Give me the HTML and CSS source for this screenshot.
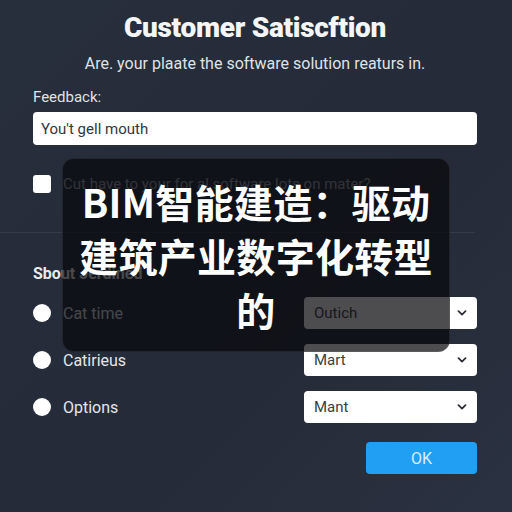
FILE: index.html
```html
<!DOCTYPE html>
<html>

<head>
    <title>Customer Satisfaction</title>
    <link rel="stylesheet" href="styles.css">
</head>

<body>
    <div id="surveycontainer">
        <h1 class="title">Customer Satiscftion</h1>
        <p class="subtitle">Are. your plaate the software solution reaturs in.</p>

        <label class="field-label" for="feedback">Feedback:</label>
        <div class="text-input" id="feedback">You't gell mouth</div>

        <div class="check-row">
            <span class="checkbox"></span>
            <span class="check-text">Cut have to your for al software lots on mater?</span>
        </div>

        <div class="divider"></div>

        <h2 class="section-title">Sbout Jerdined</h2>

        <div class="option-list">
            <div class="option-row">
                <span class="radio"></span>
                <span class="option-name">Cat time</span>
                <div class="select">Outich <svg class="chevron" viewBox="0 0 10 6"><path d="M1.5 1.2 5 4.6 8.5 1.2" /></svg></div>
            </div>
            <div class="option-row">
                <span class="radio"></span>
                <span class="option-name">Catirieus</span>
                <div class="select">Mart <svg class="chevron" viewBox="0 0 10 6"><path d="M1.5 1.2 5 4.6 8.5 1.2" /></svg></div>
            </div>
            <div class="option-row">
                <span class="radio"></span>
                <span class="option-name">Options</span>
                <div class="select">Mant <svg class="chevron" viewBox="0 0 10 6"><path d="M1.5 1.2 5 4.6 8.5 1.2" /></svg></div>
            </div>
        </div>

        <div class="actions">
            <button class="ok-button">OK</button>
        </div>
    </div>

    <!-- caption card sitting over the form -->
    <div class="caption">
        <p>BIM智能建造：驱动<br>建筑产业数字化转型<br>的</p>
    </div>
</body>

</html>
```

FILE: styles.css
```css
body {
    font-family: Roboto, "Liberation Sans", sans-serif;
    background: linear-gradient(135deg, #272e3c 0%, #252b38 60%, #2a3140 100%);
    color: #e6e8ec;
    margin: 0;
    padding: 0;
    width: 512px;
    height: 512px;
    overflow: hidden;
    position: relative;
}

#surveycontainer {
    padding: 12px 35px 0 33px;
    display: flex;
    flex-direction: column;
}

.title {
    margin: 0;
    font-size: 28px;
    line-height: 32px;
    font-weight: 900;
    text-align: center;
    color: #f4f5f7;
    letter-spacing: -0.3px;
}

.subtitle {
    margin: 10px 0 0;
    font-size: 16px;
    line-height: 20px;
    text-align: center;
    color: #dfe2e7;
}

.field-label {
    margin-top: 13px;
    font-size: 15px;
    line-height: 20px;
    color: #dfe2e7;
}

.text-input {
    margin-top: 5px;
    height: 33px;
    box-sizing: border-box;
    background-color: #fff;
    border-radius: 4px;
    padding: 0 8px;
    display: flex;
    align-items: center;
    font-size: 15px;
    color: #33363b;
}

.check-row {
    margin-top: 30px;
    height: 18px;
    display: flex;
    align-items: center;
    gap: 12px;
}

.checkbox {
    width: 18px;
    height: 18px;
    border-radius: 3px;
    background-color: #fff;
}

.check-text {
    font-size: 15px;
    color: #9ba1ab;
}

.divider {
    margin: 39px -35px 0 -33px;
    width: 475px;
    height: 1px;
    background-color: rgba(255, 255, 255, 0.07);
}

.section-title {
    margin: 31px 0 0;
    font-size: 16px;
    line-height: 20px;
    font-weight: 700;
    color: #e9ebee;
}

.option-list {
    margin-top: 13px;
    display: flex;
    flex-direction: column;
    gap: 15px;
}

.option-row {
    display: flex;
    align-items: center;
    height: 32px;
}

.radio {
    width: 18px;
    height: 18px;
    border-radius: 50%;
    background-color: #fff;
}

.option-name {
    margin-left: 12px;
    font-size: 16px;
    color: #e3e6ea;
}

.select {
    margin-left: auto;
    width: 173px;
    height: 32px;
    box-sizing: border-box;
    background-color: #fff;
    border-radius: 4px;
    padding: 0 10px;
    display: flex;
    align-items: center;
    justify-content: space-between;
    font-size: 15px;
    color: #3a3d42;
}

.chevron {
    width: 10px;
    height: 6px;
    fill: none;
    stroke: #2d3036;
    stroke-width: 1.8;
    stroke-linecap: round;
    stroke-linejoin: round;
}

.actions {
    margin-top: 19px;
    display: flex;
    justify-content: flex-end;
}

.ok-button {
    width: 111px;
    height: 32px;
    border: none;
    border-radius: 4px;
    background-color: #21a0f3;
    color: #d9eeff;
    font-family: Roboto, "Liberation Sans", sans-serif;
    font-size: 16px;
    cursor: pointer;
}

/* dark translucent card with the headline */
.caption {
    position: absolute;
    left: 62px;
    top: 158px;
    width: 388px;
    height: 194px;
    box-sizing: border-box;
    border-radius: 12px;
    background-color: rgba(8, 9, 12, 0.72);
    border: 1px solid rgba(255, 255, 255, 0.08);
    display: flex;
    align-items: center;
    justify-content: center;
}

.caption p {
    margin: 0;
    font-family: "Noto Sans CJK SC", "Noto Sans", sans-serif;
    font-size: 39px;
    line-height: 54px;
    font-weight: 700;
    text-align: center;
    color: #fff;
    letter-spacing: 0.3px;
}
```
